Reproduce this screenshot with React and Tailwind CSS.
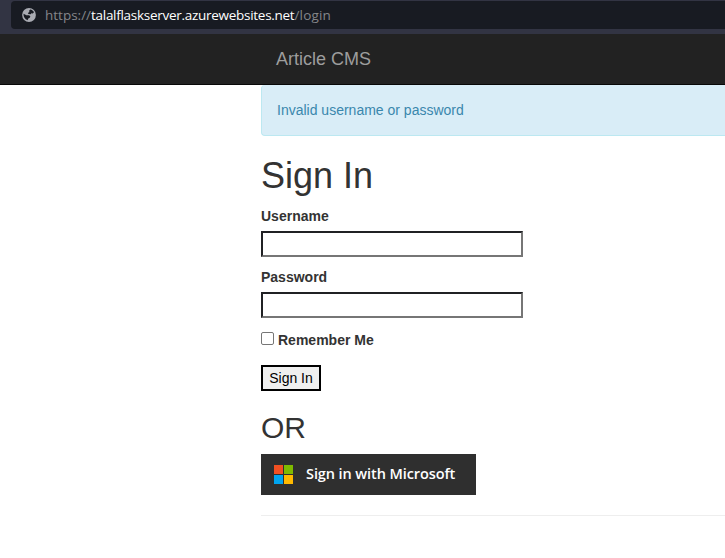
function GlobeIcon() {
  return (
    <svg viewBox="0 0 14 14" className="size-[14px] shrink-0">
      <circle cx="7" cy="7" r="6.9" fill="#a9abb2" />
      <path
        fill="#181b22"
        d="M8.2 1.5C10 1.8 11.3 2.8 12 4.2L10.8 5.4 9.4 5.3 8.7 6.2 6.4 6 5.9 4.9 7.4 4.1 7.1 2.7zM1.5 5.8L3 6.4 4.4 7.2 7 7.3 8.3 8.3 8 9.6 6.3 10.4 5.6 12.2C3 11.4 1.3 9 1.5 5.8z"
      />
    </svg>
  );
}

function AddressBar() {
  return (
    <div className="h-[34px] bg-[#323443] pt-px pl-[11px]">
      <div className="flex h-7 items-center rounded-l-[4px] bg-[#181b22] pl-[11px] font-['Open_Sans','Noto_Sans',sans-serif] text-[13.5px] text-[#85868a]">
        <GlobeIcon />
        <div className="ml-[9px] flex whitespace-nowrap leading-7">
          <span className="w-[46px]">https://</span>
          <span className="w-[203.5px] tracking-[-0.28px] text-white">talalflaskserver.azurewebsites.net</span>
          <span className="tracking-[0.15px]">/login</span>
        </div>
      </div>
    </div>
  );
}

function Field({ label, type }) {
  return (
    <label className="mb-[10px] block font-bold">
      <span className="mb-[5px] block leading-5">{label}</span>
      <input
        type={type}
        className="block h-[26px] w-[262px] border-2 border-t-[#202124] border-r-[#767676] border-b-[#767676] border-l-[#202124] bg-white outline-none"
      />
    </label>
  );
}

function MicrosoftButton() {
  return (
    <button className="flex h-[41px] w-[215px] items-center bg-[#2f2f2f] pl-[13px] font-['Open_Sans','Noto_Sans',sans-serif] text-[14.5px] font-semibold whitespace-nowrap text-white">
      <svg viewBox="0 0 19 19" className="size-[19px] shrink-0">
        <path fill="#f25022" d="M0 0h9v9H0z" />
        <path fill="#7fba00" d="M10 0h9v9h-9z" />
        <path fill="#00a4ef" d="M0 10h9v9H0z" />
        <path fill="#ffb900" d="M10 10h9v9h-9z" />
      </svg>
      <span className="mb-[2px] ml-[13px] tracking-[-0.09px]">Sign in with Microsoft</span>
    </button>
  );
}

export default function App() {
  return (
    <div className="h-[558px] w-[725px] overflow-hidden bg-white font-['Liberation_Sans',Arial,sans-serif] text-[14px] leading-5 text-[#333]">
      <AddressBar />
      <nav className="flex h-[51px] items-center border-b border-[#080808] bg-[#222] pl-[276px] text-[18px] text-[#9d9d9d]">
        Article CMS
      </nav>
      <main className="pl-[261px]">
        <div className="h-[51px] rounded-l-[4px] border-b border-l border-[#bce8f1] bg-[#d9edf7] pt-[15px] pl-[15px] text-[#3a87ad]">
          Invalid username or password
        </div>
        <h1 className="mt-5 mb-[10px] text-[36px] leading-10 font-normal">Sign In</h1>
        <form>
          <Field label="Username" type="text" />
          <Field label="Password" type="password" />
          <label className="mt-3 flex h-5 items-center font-bold">
            <input
              type="checkbox"
              className="mr-1 mb-[3px] size-[13px] appearance-none rounded-[2px] border border-[#767676] bg-white"
            />
            Remember Me
          </label>
          <button
            type="button"
            className="mt-[15px] block h-[26px] w-[60px] border-2 border-black bg-[#efefef] leading-[22px] whitespace-nowrap text-black"
          >
            Sign In
          </button>
        </form>
        <h2 className="mt-5 mb-[10px] text-[30px] leading-[33px] font-normal">OR</h2>
        <MicrosoftButton />
        <hr className="mt-5 border-t border-[#eee]" />
      </main>
    </div>
  );
}
